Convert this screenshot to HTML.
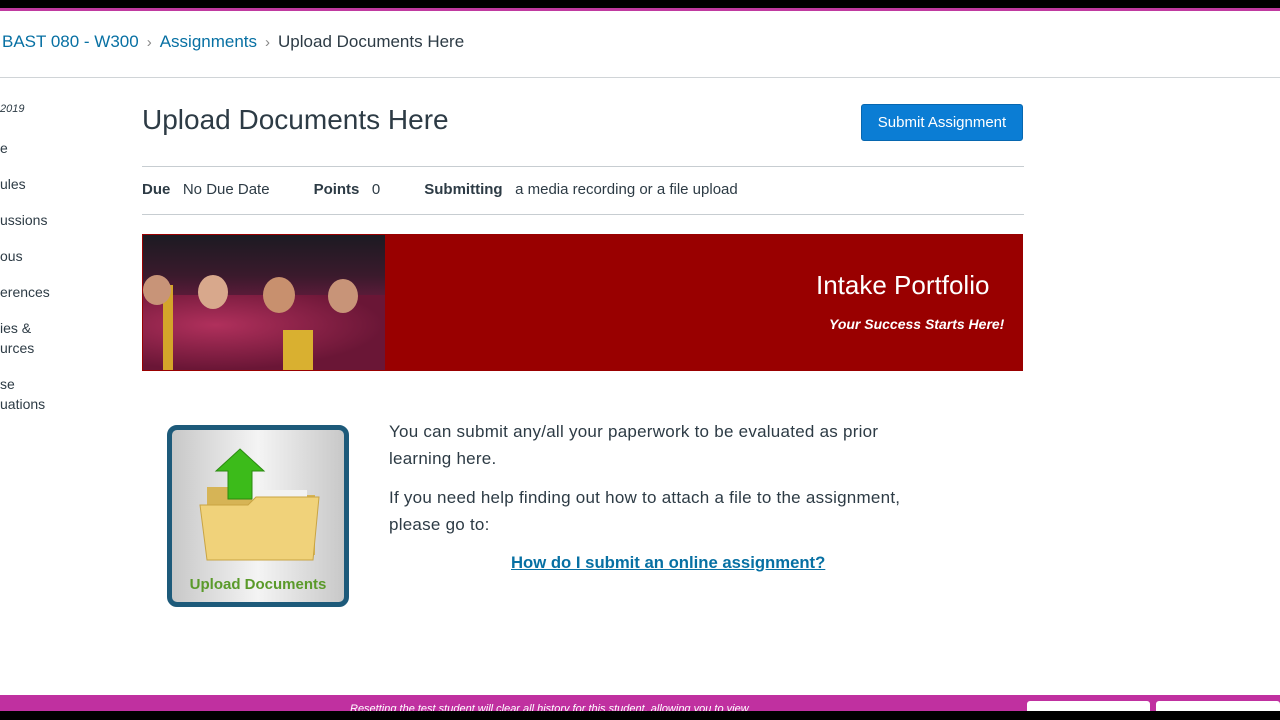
<!DOCTYPE html>
<html><head><meta charset="utf-8"><style>
*{margin:0;padding:0;box-sizing:border-box}
body{width:1280px;height:720px;overflow:hidden;background:#fff;font-family:"Liberation Sans",sans-serif;color:#2d3b45;position:relative}
.abs{position:absolute}
a{color:#0770a3;text-decoration:none}
</style></head><body>
<div class="abs" style="left:0;top:0;width:1280px;height:8px;background:#000"></div>
<div class="abs" style="left:0;top:8px;width:1280px;height:3px;background:#c03aa0"></div>
<div class="abs" style="left:2px;top:32px;font-size:17px;white-space:nowrap">
<a>BAST 080 - W300</a><span style="color:#888;font-size:15px;margin:0 8px">›</span><a>Assignments</a><span style="color:#888;font-size:15px;margin:0 8px">›</span><span style="color:#2d3b45">Upload Documents Here</span></div>
<div class="abs" style="left:0;top:77px;width:1280px;height:1px;background:#d0d4d7"></div>
<div class="abs" style="left:0;top:103px;font-size:11px;font-style:italic;color:#2d3b45">2019</div>
<div class="abs" style="left:0;top:138px;font-size:14px;line-height:20px;color:#2d3b45">
<div style="height:36px">e</div><div style="height:36px">ules</div><div style="height:36px">ussions</div><div style="height:36px">ous</div><div style="height:36px">erences</div><div style="height:56px">ies &amp;<br>urces</div><div>se<br>uations</div></div>
<div class="abs" style="left:142px;top:104px;font-size:28px;color:#2d3b45">Upload Documents Here</div>
<div class="abs" style="left:861px;top:104px;width:162px;height:37px;background:#0b7dd4;border:1px solid #0767b0;border-radius:3px;color:#fff;font-size:15px;text-align:center;line-height:35px">Submit Assignment</div>
<div class="abs" style="left:142px;top:166px;width:882px;height:1px;background:#c7cdd1"></div>
<div class="abs" style="left:142px;top:181px;font-size:15px;white-space:nowrap">
<b>Due</b>&nbsp;&nbsp; No Due Date<span style="display:inline-block;width:44px"></span><b>Points</b>&nbsp;&nbsp; 0<span style="display:inline-block;width:44px"></span><b>Submitting</b>&nbsp;&nbsp; a media recording or a file upload</div>
<div class="abs" style="left:142px;top:214px;width:882px;height:1px;background:#c7cdd1"></div>
<div class="abs" style="left:142px;top:234px;width:881px;height:137px;background:#990000"></div>
<div class="abs" style="left:143px;top:235px;width:242px;height:135px;overflow:hidden;background:linear-gradient(180deg,#1c1a22 0%,#3a1a2c 30%,#7a1c45 60%,#8a2250 100%)">
<div class="abs" style="left:0;top:60px;width:242px;height:75px;background:radial-gradient(ellipse at 30% 40%,#b0305c,#6a1636 70%)"></div>
<div class="abs" style="left:20px;top:50px;width:10px;height:85px;background:#d4a52a"></div>
<div class="abs" style="left:140px;top:95px;width:30px;height:40px;background:#d9b030"></div>
<div class="abs" style="left:55px;top:40px;width:30px;height:34px;border-radius:50%;background:#d8a88c"></div>
<div class="abs" style="left:120px;top:42px;width:32px;height:36px;border-radius:50%;background:#c8906e"></div>
<div class="abs" style="left:185px;top:44px;width:30px;height:34px;border-radius:50%;background:#c89478"></div>
<div class="abs" style="left:0;top:40px;width:28px;height:30px;border-radius:50%;background:#c89478"></div>
</div>
<div class="abs" style="left:816px;top:270px;font-size:26px;color:#fff;white-space:nowrap">Intake Portfolio</div>
<div class="abs" style="left:829px;top:316px;font-size:14px;color:#fff;font-style:italic;font-weight:bold;white-space:nowrap">Your Success Starts Here!</div>
<div class="abs" style="left:167px;top:425px;width:182px;height:182px;border:5px solid #1d5a7a;border-radius:10px;background:linear-gradient(90deg,#c8c8c8,#f4f4f4 50%,#c8c8c8)">
<svg class="abs" style="left:25px;top:15px" width="130" height="120" viewBox="0 0 130 120">
<path d="M10 42 h40 l8 8 h60 v60 h-108z" fill="#d6b456"/>
<rect x="55" y="45" width="55" height="40" fill="#f2f2f2"/>
<path d="M3 60 h48 l8 -8 h63 l-6 63 h-106z" fill="#f0d27a" stroke="#c9a443"/>
<path d="M43 4 l24 22 h-12 v28 h-24 v-28 h-12z" fill="#3cbb1a" stroke="#2b8a10"/>
</svg>
<div class="abs" style="left:0;top:146px;width:172px;text-align:center;font-size:15px;font-weight:bold;color:#5a9a2a">Upload Documents</div>
</div>
<div class="abs" style="left:389px;top:418px;width:535px;font-size:17px;letter-spacing:0.25px;line-height:27px;color:#2d3b45">
<p>You can submit any/all your paperwork to be evaluated as prior learning here.</p>
<p style="margin-top:12px">If you need help finding out how to attach a file to the assignment, please go to:</p></div>
<div class="abs" style="left:511px;top:553px;font-size:16.7px;font-weight:bold;color:#0770a3;text-decoration:underline">How do I submit an online assignment?</div>
<div class="abs" style="left:0;top:695px;width:1280px;height:17px;background:#c030a0"></div>
<div class="abs" style="left:350px;top:703px;font-size:11px;font-style:italic;color:#fff;white-space:nowrap">Resetting the test student will clear all history for this student, allowing you to view</div>
<div class="abs" style="left:1027px;top:701px;width:123px;height:12px;background:#fff;border-radius:3px 3px 0 0"></div>
<div class="abs" style="left:1156px;top:701px;width:124px;height:12px;background:#fff;border-radius:3px 3px 0 0"></div>
<div class="abs" style="left:0;top:711px;width:1280px;height:9px;background:#000"></div>
</body></html>
